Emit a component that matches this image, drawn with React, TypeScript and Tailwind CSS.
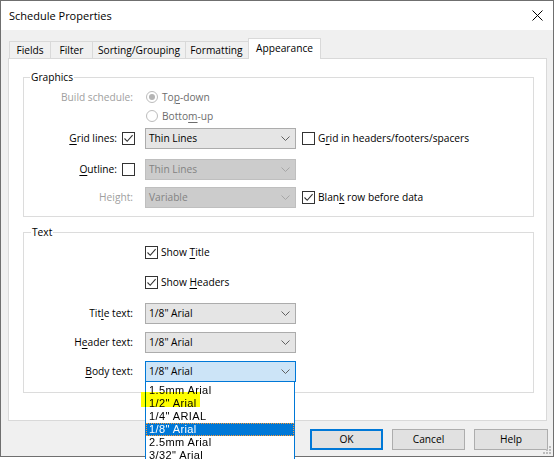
import React from "react";

const U = ({ children }: { children: React.ReactNode }) => (
  <span className="underline underline-offset-[2px] decoration-[1px]">{children}</span>
);

function Check({ checked }: { checked?: boolean }) {
  return (
    <span className="w-[13px] h-[13px] border border-[#333333] bg-white flex items-center justify-center shrink-0">
      {checked && (
        <svg width="11" height="11" viewBox="0 0 11 11">
          <path d="M1.5 5.5 L4.2 8.3 L9.6 2.2" fill="none" stroke="#333333" strokeWidth="1.1" />
        </svg>
      )}
    </span>
  );
}

function Radio({ checked }: { checked?: boolean }) {
  return (
    <span className="w-[12px] h-[12px] rounded-full border border-[#bcbcbc] bg-white flex items-center justify-center shrink-0">
      {checked && <span className="w-[6px] h-[6px] rounded-full bg-[#b4b4b4]" />}
    </span>
  );
}

function Chevron({ color }: { color: string }) {
  return (
    <svg width="9" height="5" viewBox="0 0 9 5" className="shrink-0">
      <path d="M0.5 0.5 L4.5 4.5 L8.5 0.5" fill="none" stroke={color} strokeWidth="1" />
    </svg>
  );
}

type SelKind = "normal" | "disabled" | "focused";

function Select({ value, kind = "normal" }: { value: string; kind?: SelKind }) {
  const cls =
    kind === "focused"
      ? "bg-[#cce4f7] border-[#0078d7] text-black"
      : kind === "disabled"
      ? "bg-[#cccccc] border-[#bfbfbf] text-[#838383]"
      : "bg-[#e5e5e5] border-[#acacac] text-black";
  return (
    <div className={`w-[151px] h-[21px] border flex items-center justify-between pl-[3px] pr-[5px] shrink-0 ${cls}`}>
      <span>{value}</span>
      <Chevron color={kind === "disabled" ? "#a6a6a6" : "#606060"} />
    </div>
  );
}

const listItems = ['1.5mm Arial', '1/2" Arial', '1/4" ARIAL', '1/8" Arial', '2.5mm Arial', '3/32" Arial'];

export default function App() {
  return (
    <div className="w-[555px] h-[459px] bg-white overflow-hidden font-['Open_Sans',sans-serif] text-[10.2px] text-black leading-none">
      <div className="relative w-[554px] h-[457px] border border-[#6f6f6f] bg-[#f0f0f0] flex flex-col">
        {/* Title bar */}
        <div className="h-[29px] bg-white flex items-center justify-between pl-[8px] pr-[10px] shrink-0">
          <span className="text-[11px]">Schedule Properties</span>
          <svg width="11" height="11" viewBox="0 0 11 11">
            <path d="M0.5 0.5 L10.5 10.5 M10.5 0.5 L0.5 10.5" stroke="#000" strokeWidth="1" />
          </svg>
        </div>

        {/* Body */}
        <div className="flex flex-col pl-[7px] pt-[8px]">
          {/* Tabs */}
          <div className="flex items-end pl-[1px] h-[20px]">
            <div className="w-[41px] h-[17px] border-t border-l border-[#d9d9d9] flex items-center justify-center">Fields</div>
            <div className="w-[42px] h-[17px] border-t border-l border-[#d9d9d9] flex items-center justify-center">Filter</div>
            <div className="w-[93px] h-[17px] border-t border-l border-[#d9d9d9] flex items-center justify-center">Sorting/Grouping</div>
            <div className="w-[65px] h-[17px] border-t border-l border-r border-[#d9d9d9] flex items-center justify-center pr-[2px]">Formatting</div>
            <div className="relative z-10 -ml-[2px] -mb-px w-[73px] h-[21px] border-t border-l border-r border-[#d9d9d9] bg-white flex items-center justify-center pb-[2px]">
              Appearance
            </div>
          </div>

          {/* Panel */}
          <div className="w-[539px] h-[363px] border border-[#d9d9d9] bg-white flex flex-col pl-[14px] pt-[11px]">
            {/* Graphics */}
            <fieldset className="w-[511px] border border-[#dcdcdc] pb-[8px]">
              <legend className="ml-[6px] px-[1px] h-[14px] leading-[14px]">Graphics</legend>
              <div className="mt-[4px] h-[18px] flex items-center">
                <div className="w-[121px] pr-[12px] flex justify-end text-[#a0a0a0]">Build schedule:</div>
                <div className="flex items-center gap-[4px] text-[#6d6d6d]">
                  <span className="ml-[1px]"><Radio checked /></span>
                  <span>
                    To<U>p</U>-down
                  </span>
                </div>
              </div>
              <div className="mt-[1px] h-[18px] flex items-center">
                <div className="w-[121px]" />
                <div className="flex items-center gap-[4px] text-[#6d6d6d]">
                  <span className="ml-[1px]"><Radio /></span>
                  <span>
                    Botto<U>m</U>-up
                  </span>
                </div>
              </div>
              <div className="mt-[3px] h-[21px] flex items-center">
                <div className="w-[121px] pr-[10px] flex justify-end items-center gap-[5px]">
                  <span>
                    <U>G</U>rid lines:
                  </span>
                  <Check checked />
                </div>
                <Select value="Thin Lines" />
                <div className="ml-[6px] flex items-center gap-[3px]">
                  <Check />
                  <span>
                    G<U>r</U>id in headers/footers/spacers
                  </span>
                </div>
              </div>
              <div className="mt-[10px] h-[21px] flex items-center">
                <div className="w-[121px] pr-[10px] flex justify-end items-center gap-[5px]">
                  <span>
                    <U>O</U>utline:
                  </span>
                  <Check />
                </div>
                <Select value="Thin Lines" kind="disabled" />
              </div>
              <div className="mt-[7px] h-[21px] flex items-center">
                <div className="w-[121px] pr-[12px] flex justify-end text-[#a0a0a0]">Height:</div>
                <Select value="Variable" kind="disabled" />
                <div className="ml-[6px] flex items-center gap-[3px]">
                  <Check checked />
                  <span>
                    Blan<U>k</U> row before data
                  </span>
                </div>
              </div>
            </fieldset>

            {/* Text */}
            <fieldset className="mt-[8px] w-[511px] border border-[#dcdcdc] pb-[10px]">
              <legend className="ml-[7px] px-[1px] h-[14px] leading-[14px]">Text</legend>
              <div className="mt-[4px] h-[18px] flex items-center">
                <div className="w-[121px]" />
                <div className="flex items-center gap-[3px]">
                  <Check checked />
                  <span>
                    Show <U>T</U>itle
                  </span>
                </div>
              </div>
              <div className="mt-[12px] h-[18px] flex items-center">
                <div className="w-[121px]" />
                <div className="flex items-center gap-[3px]">
                  <Check checked />
                  <span>
                    Show <U>H</U>eaders
                  </span>
                </div>
              </div>
              <div className="mt-[12px] h-[21px] flex items-center">
                <div className="w-[121px] pr-[12px] flex justify-end">
                  <span>
                    Tit<U>l</U>e text:
                  </span>
                </div>
                <Select value={'1/8" Arial'} />
              </div>
              <div className="mt-[8px] h-[21px] flex items-center">
                <div className="w-[121px] pr-[12px] flex justify-end">
                  <span>
                    H<U>e</U>ader text:
                  </span>
                </div>
                <Select value={'1/8" Arial'} />
              </div>
              <div className="mt-[8px] h-[21px] flex items-center">
                <div className="w-[121px] pr-[12px] flex justify-end">
                  <span>
                    <U>B</U>ody text:
                  </span>
                </div>
                <div className="relative">
                  <Select value={'1/8" Arial'} kind="focused" />
                  {/* Open dropdown list */}
                  <div className="absolute z-20 left-0 top-[21px] w-[150px] h-[90px] bg-white border-l border-r border-[#0078d7] flex flex-col pt-[2px] font-['Liberation_Sans',sans-serif] text-[11px]">
                    {listItems.map((it, i) => (
                      <div
                        key={it}
                        className={
                          i === 3
                            ? "h-[13px] shrink-0 flex items-center pl-[2px] bg-[#0078d7] text-white border border-dotted border-[#ff9a33]"
                            : "h-[13px] shrink-0 flex items-center pl-[3px] tracking-[0.4px]"
                        }
                      >
                        <span className={i === 3 ? "tracking-[0.4px]" : ""}>{it}</span>
                      </div>
                    ))}
                    <div className="absolute -left-[5px] top-[10px] w-[59px] h-[15px] bg-[#ffff00] mix-blend-multiply" />
                  </div>
                </div>
              </div>
            </fieldset>
          </div>

          {/* Buttons */}
          <div className="mt-[8px] flex justify-end gap-[9px] pr-[5px]">
            <button className="w-[73px] h-[21px] border-2 border-[#0078d7] bg-[#e1e1e1] flex items-center justify-center">OK</button>
            <button className="w-[73px] h-[21px] border border-[#adadad] bg-[#e1e1e1] flex items-center justify-center">Cancel</button>
            <button className="w-[74px] h-[21px] border border-[#adadad] bg-[#e1e1e1] flex items-center justify-center">Help</button>
          </div>
        </div>

        {/* Size grip */}
        <svg className="absolute right-[1px] bottom-[1px]" width="10" height="10" viewBox="0 0 10 10">
          <rect x="7" y="1" width="2" height="2" fill="#bcbcbc" />
          <rect x="4" y="4" width="2" height="2" fill="#bcbcbc" />
          <rect x="7" y="4" width="2" height="2" fill="#bcbcbc" />
          <rect x="1" y="7" width="2" height="2" fill="#bcbcbc" />
          <rect x="4" y="7" width="2" height="2" fill="#bcbcbc" />
          <rect x="7" y="7" width="2" height="2" fill="#bcbcbc" />
        </svg>
      </div>
    </div>
  );
}
